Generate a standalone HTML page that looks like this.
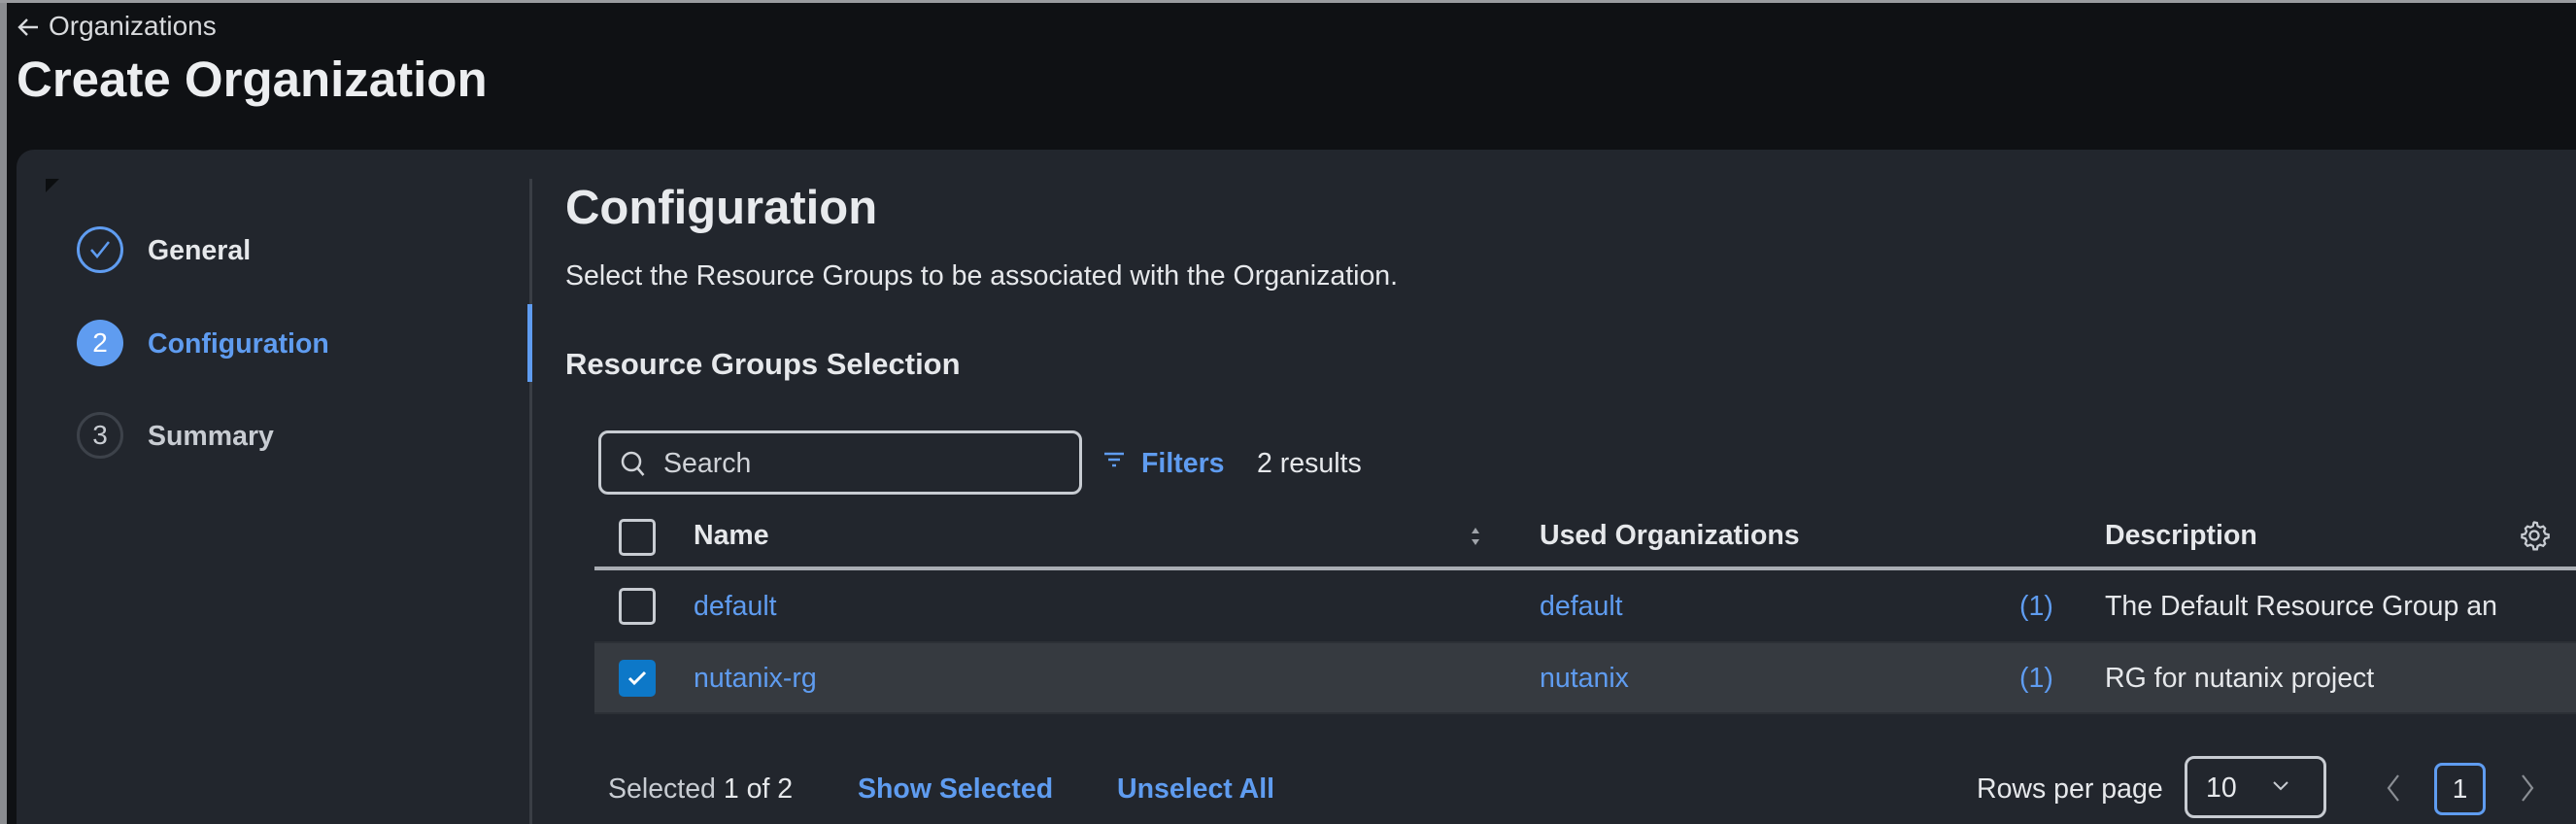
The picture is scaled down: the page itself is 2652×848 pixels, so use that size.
<!DOCTYPE html>
<html><head><meta charset="utf-8"><style>
*{margin:0;padding:0;box-sizing:border-box}
html,body{width:2652px;height:848px;overflow:hidden}
body{background:#0f1114;font-family:"Liberation Sans",sans-serif;color:#e6e8eb;position:relative}
.a{position:absolute;white-space:nowrap;line-height:1}
.blue{color:#5f9cf0}
.b{font-weight:bold}
.cb{position:absolute;width:38px;height:38px;border:3px solid #c8ccd2;border-radius:5px}
.t{font-size:28.5px}
</style></head><body>
<div class="a" style="left:0;top:0;width:7px;height:848px;background:#8a8c90"></div>
<div class="a" style="left:0;top:0;width:2652px;height:3px;background:#9a9ca0"></div>
<svg class="a" style="left:17px;top:17px" width="24" height="22" viewBox="0 0 24 22"><path d="M22 11H3M11 3L3 11l8 8" fill="none" stroke="#d8dadd" stroke-width="2.4"/></svg>
<div class="a" style="left:50px;top:13px;font-size:28px;color:#d8dadd">Organizations</div>
<div class="a b" style="left:17px;top:56px;font-size:51px;color:#eceef0">Create Organization</div>
<div class="a" style="left:17px;top:154px;width:2660px;height:694px;background:#22262d;border-radius:18px 18px 0 0"></div>
<div class="a" style="left:47px;top:184px;width:0;height:0;border-top:14px solid #0c0e10;border-right:14px solid transparent"></div>
<div class="a" style="left:545px;top:184px;width:3px;height:664px;background:#3a3e45"></div>
<div class="a" style="left:543px;top:313px;width:5px;height:80px;background:#5f9cf0"></div>
<div class="a" style="left:79px;top:233px;width:48px;height:48px;border:3px solid #5f9cf0;border-radius:50%"></div>
<svg class="a" style="left:91px;top:245px" width="24" height="24" viewBox="0 0 24 24"><path d="M3 12l6 7L21 4" fill="none" stroke="#5f9cf0" stroke-width="2.5"/></svg>
<div class="a b t" style="left:152px;top:244px">General</div>
<div class="a" style="left:79px;top:329px;width:48px;height:48px;background:#5f9cf0;border-radius:50%;font-size:28px;color:#fff;text-align:center;line-height:48px">2</div>
<div class="a b blue t" style="left:152px;top:340px">Configuration</div>
<div class="a" style="left:79px;top:424px;width:48px;height:48px;border:3px solid #3d424a;border-radius:50%;font-size:28px;color:#c8ccd2;text-align:center;line-height:42px">3</div>
<div class="a b t" style="left:152px;top:435px;color:#c8ccd2">Summary</div>
<div class="a b" style="left:582px;top:190px;font-size:49px;color:#e8eaed">Configuration</div>
<div class="a t" style="left:582px;top:270px">Select the Resource Groups to be associated with the Organization.</div>
<div class="a b" style="left:582px;top:359px;font-size:31px">Resource Groups Selection</div>
<div class="a" style="left:616px;top:443px;width:498px;height:66px;border:3px solid #c8ccd2;border-radius:10px"></div>
<svg class="a" style="left:638px;top:463px" width="28" height="30" viewBox="0 0 28 30"><circle cx="12" cy="12" r="9" fill="none" stroke="#d0d3d8" stroke-width="2.5"/><path d="M18.5 19l6 7" stroke="#d0d3d8" stroke-width="2.5"/></svg>
<div class="a t" style="left:683px;top:463px;color:#d0d3d8">Search</div>
<svg class="a" style="left:1135px;top:464px" width="24" height="20" viewBox="0 0 24 20"><path d="M2 3h20M6 9h12M10 15h4" stroke="#5f9cf0" stroke-width="2.5"/></svg>
<div class="a b blue t" style="left:1175px;top:463px">Filters</div>
<div class="a t" style="left:1294px;top:463px">2 results</div>
<div class="cb" style="left:637px;top:534px"></div>
<div class="a b t" style="left:714px;top:537px">Name</div>
<svg class="a" style="left:1511px;top:540px" width="16" height="24" viewBox="0 0 16 24"><path d="M8 3l4 6H4zM8 21l4-6H4z" fill="#a0a4aa"/></svg>
<div class="a b t" style="left:1585px;top:537px">Used Organizations</div>
<div class="a b t" style="left:2167px;top:537px">Description</div>
<svg class="a" style="left:2592px;top:534px" width="34" height="34" viewBox="0 0 24 24"><circle cx="12" cy="12" r="3.2" fill="none" stroke="#c8ccd2" stroke-width="1.6"/><path d="M12 2.5l2 .4.5 2.3 1.8 1 2.2-.8 1.4 1.5-.8 2.2 1 1.8 2.3.5v2.2l-2.3.5-1 1.8.8 2.2-1.4 1.5-2.2-.8-1.8 1-.5 2.3h-2.4l-.5-2.3-1.8-1-2.2.8-1.5-1.5.8-2.2-1-1.8-2.3-.5v-2.2l2.3-.5 1-1.8-.8-2.2 1.5-1.5 2.2.8 1.8-1 .5-2.3z" fill="none" stroke="#c8ccd2" stroke-width="1.6"/></svg>
<div class="a" style="left:612px;top:583px;width:2040px;height:4px;background:#a9adb3"></div>
<div class="cb" style="left:637px;top:605px"></div>
<div class="a blue t" style="left:714px;top:610px">default</div>
<div class="a blue t" style="left:1585px;top:610px">default</div>
<div class="a blue t" style="left:2079px;top:610px">(1)</div>
<div class="a t" style="left:2167px;top:610px;width:403px;overflow:hidden">The Default Resource Group and</div>
<div class="a" style="left:612px;top:660px;width:2040px;height:75px;background:#363a40;border-top:2px solid #2c3036;border-bottom:2px solid #2c3036"></div>
<div class="a" style="left:637px;top:679px;width:38px;height:38px;background:#0d78c8;border-radius:5px"></div>
<svg class="a" style="left:644px;top:686px" width="24" height="24" viewBox="0 0 24 24"><path d="M4 12l5 5L20 6" fill="none" stroke="#fff" stroke-width="3"/></svg>
<div class="a blue t" style="left:714px;top:684px">nutanix-rg</div>
<div class="a blue t" style="left:1585px;top:684px">nutanix</div>
<div class="a blue t" style="left:2079px;top:684px">(1)</div>
<div class="a t" style="left:2167px;top:684px">RG for nutanix project</div>
<div class="a t" style="left:626px;top:798px;color:#c8ccd2">Selected <span style="color:#e6e8eb">1 of 2</span></div>
<div class="a b blue t" style="left:883px;top:798px">Show Selected</div>
<div class="a b blue t" style="left:1150px;top:798px">Unselect All</div>
<div class="a t" style="left:2035px;top:798px">Rows per page</div>
<div class="a" style="left:2249px;top:778px;width:146px;height:64px;border:3px solid #c8ccd2;border-radius:10px"></div>
<div class="a t" style="left:2271px;top:797px">10</div>
<svg class="a" style="left:2338px;top:802px" width="20" height="14" viewBox="0 0 20 14"><path d="M3 3l7 7 7-7" fill="none" stroke="#c8ccd2" stroke-width="2"/></svg>
<svg class="a" style="left:2454px;top:795px" width="20" height="32" viewBox="0 0 20 32"><path d="M15 3L5 16l10 13" fill="none" stroke="#8a8e94" stroke-width="2.2"/></svg>
<div class="a" style="left:2506px;top:785px;width:53px;height:54px;border:3px solid #5f9cf0;border-radius:8px;font-size:28px;text-align:center;line-height:48px">1</div>
<svg class="a" style="left:2592px;top:795px" width="20" height="32" viewBox="0 0 20 32"><path d="M5 3l10 13L5 29" fill="none" stroke="#8a8e94" stroke-width="2.2"/></svg>
</body></html>
